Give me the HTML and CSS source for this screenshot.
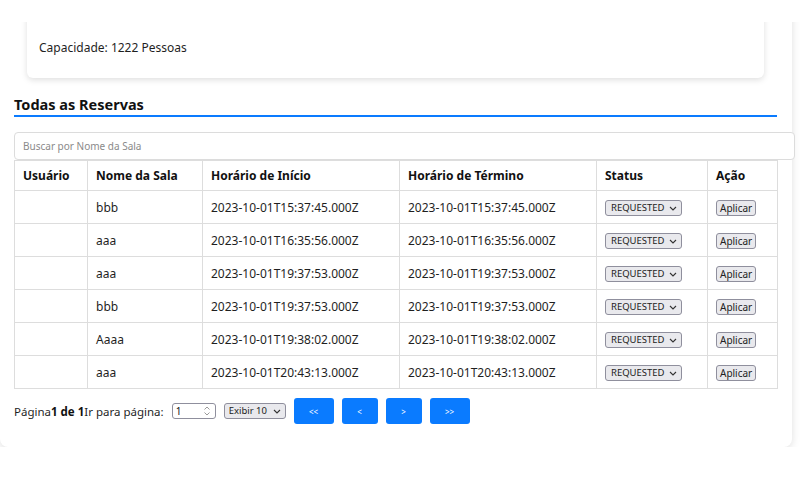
FILE: index.html
```html
<!DOCTYPE html>
<html lang="pt">
<head>
<meta charset="utf-8">
<title>Reservas</title>
<link rel="stylesheet" href="styles.css">
</head>
<body>
<div class="topbar"></div>
<main class="panel">
  <section class="room-card">
    <p class="room-line">Capacidade: 1222 Pessoas</p>
  </section>

  <h3 class="section-title">Todas as Reservas</h3>

  <input class="search" type="text" placeholder="Buscar por Nome da Sala">

  <table class="res-table">
    <colgroup>
      <col class="c-user"><col class="c-room"><col class="c-start"><col class="c-end"><col class="c-status"><col class="c-action">
    </colgroup>
    <thead>
      <tr><th>Usuário</th><th>Nome da Sala</th><th>Horário de Início</th><th>Horário de Término</th><th>Status</th><th>Ação</th></tr>
    </thead>
    <tbody>
      <tr><td></td><td>bbb</td><td>2023-10-01T15:37:45.000Z</td><td>2023-10-01T15:37:45.000Z</td>
        <td><span class="sel"><select class="status"><option>REQUESTED</option></select><svg class="chev" viewBox="0 0 8 5" width="8" height="5"><path d="M1 1l3 3 3-3" fill="none" stroke="#333" stroke-width="1.1"/></svg></span></td>
        <td><button class="apply">Aplicar</button></td></tr>
      <tr><td></td><td>aaa</td><td>2023-10-01T16:35:56.000Z</td><td>2023-10-01T16:35:56.000Z</td>
        <td><span class="sel"><select class="status"><option>REQUESTED</option></select><svg class="chev" viewBox="0 0 8 5" width="8" height="5"><path d="M1 1l3 3 3-3" fill="none" stroke="#333" stroke-width="1.1"/></svg></span></td>
        <td><button class="apply">Aplicar</button></td></tr>
      <tr><td></td><td>aaa</td><td>2023-10-01T19:37:53.000Z</td><td>2023-10-01T19:37:53.000Z</td>
        <td><span class="sel"><select class="status"><option>REQUESTED</option></select><svg class="chev" viewBox="0 0 8 5" width="8" height="5"><path d="M1 1l3 3 3-3" fill="none" stroke="#333" stroke-width="1.1"/></svg></span></td>
        <td><button class="apply">Aplicar</button></td></tr>
      <tr><td></td><td>bbb</td><td>2023-10-01T19:37:53.000Z</td><td>2023-10-01T19:37:53.000Z</td>
        <td><span class="sel"><select class="status"><option>REQUESTED</option></select><svg class="chev" viewBox="0 0 8 5" width="8" height="5"><path d="M1 1l3 3 3-3" fill="none" stroke="#333" stroke-width="1.1"/></svg></span></td>
        <td><button class="apply">Aplicar</button></td></tr>
      <tr><td></td><td>Aaaa</td><td>2023-10-01T19:38:02.000Z</td><td>2023-10-01T19:38:02.000Z</td>
        <td><span class="sel"><select class="status"><option>REQUESTED</option></select><svg class="chev" viewBox="0 0 8 5" width="8" height="5"><path d="M1 1l3 3 3-3" fill="none" stroke="#333" stroke-width="1.1"/></svg></span></td>
        <td><button class="apply">Aplicar</button></td></tr>
      <tr><td></td><td>aaa</td><td>2023-10-01T20:43:13.000Z</td><td>2023-10-01T20:43:13.000Z</td>
        <td><span class="sel"><select class="status"><option>REQUESTED</option></select><svg class="chev" viewBox="0 0 8 5" width="8" height="5"><path d="M1 1l3 3 3-3" fill="none" stroke="#333" stroke-width="1.1"/></svg></span></td>
        <td><button class="apply">Aplicar</button></td></tr>
    </tbody>
  </table>

  <div class="pager">
    <span class="pager-text">Página<strong>1 de 1</strong>Ir para página:</span>
    <span class="num">
      <input class="num-input" type="text" value="1">
      <svg class="spin" viewBox="0 0 8 12" width="8" height="12"><path d="M1.5 4.5L4 2l2.5 2.5M1.5 7.5L4 10l2.5-2.5" fill="none" stroke="#9a9a9a" stroke-width="1"/></svg>
    </span>
    <span class="sel sel-size"><select class="size"><option>Exibir 10</option></select><svg class="chev" viewBox="0 0 8 5" width="8" height="5"><path d="M1 1l3 3 3-3" fill="none" stroke="#333" stroke-width="1.1"/></svg></span>
    <button class="nav wide">&lt;&lt;</button>
    <button class="nav">&lt;</button>
    <button class="nav">&gt;</button>
    <button class="nav wide">&gt;&gt;</button>
  </div>
</main>
</body>
</html>
```
FILE: styles.css
```css
* { box-sizing: border-box; }
html, body { margin: 0; padding: 0; background: #fff; }
body {
  font-family: "Noto Sans", "Open Sans", sans-serif;
  font-size: 12px;
  color: #1f1f1f;
}
.topbar {
  position: fixed;
  top: 0; left: 0; right: 0;
  height: 22px;
  background: #fff;
  z-index: 10;
}
.panel {
  width: 792px;
  padding: 0 15px 23px 14px;
  background: #fff;
  border-radius: 0 0 8px 8px;
  box-shadow: 0 2px 8px rgba(0,0,0,0.13);
}
.room-card {
  margin: 0 13px;
  padding: 39px 12px 22px;
  background: #fff;
  border-radius: 0 0 6px 6px;
  box-shadow: 0 2px 6px rgba(0,0,0,0.13);
}
.room-line {
  margin: 0;
  line-height: 17px;
  font-size: 12px;
}
.section-title {
  margin: 16px 0 0;
  padding-bottom: 1px;
  font-size: 14.5px;
  line-height: 20px;
  font-weight: 700;
  color: #111;
  border-bottom: 2px solid #0a7bff;
}
.search {
  display: block;
  box-sizing: content-box;
  width: 100%;
  height: 26px;
  margin: 15px 0 0;
  padding: 0 8px;
  border: 1px solid #dcdcdc;
  border-radius: 4px;
  font-family: inherit;
  font-size: 10px;
  color: #333;
  outline: none;
}
.search::placeholder { color: #8a8a8a; }
.res-table {
  width: 100%;
  border-collapse: collapse;
  table-layout: fixed;
}
.c-user { width: 73px; }
.c-room { width: 115px; }
.c-start { width: 197px; }
.c-end { width: 197px; }
.c-status { width: 111px; }
.c-action { width: 70px; }
.res-table th, .res-table td {
  border: 1px solid #dddddd;
  padding: 0 7px 0 8px;
  text-align: left;
  vertical-align: middle;
  white-space: nowrap;
}
.res-table th {
  height: 30px;
  font-weight: 700;
  font-size: 12px;
  color: #111;
}
.res-table td {
  height: 33px;
  font-size: 12px;
}
.sel {
  position: relative;
  display: inline-block;
  vertical-align: middle;
}
.sel select {
  appearance: none;
  -webkit-appearance: none;
  display: block;
  height: 16px;
  margin: 0;
  padding: 0 14px 0 5px;
  font-family: inherit;
  font-size: 9.5px;
  line-height: 14px;
  color: #222;
  background: #e9e9ed;
  border: 1px solid #8f8f9d;
  border-radius: 3px;
}
.status { width: 77px; }
.chev {
  position: absolute;
  right: 5px;
  top: 6px;
  pointer-events: none;
}
.apply {
  display: inline-block;
  vertical-align: middle;
  height: 16px;
  margin: 0;
  padding: 0 3px;
  font-family: inherit;
  font-size: 10px;
  line-height: 14px;
  color: #222;
  background: #e9e9ed;
  border: 1px solid #8f8f9d;
  border-radius: 3px;
}
.pager {
  display: flex;
  align-items: center;
  gap: 8px;
  margin-top: 9px;
}
.pager-text {
  font-size: 11.5px;
  color: #1f1f1f;
}
.pager-text strong { font-weight: 700; color: #111; }
.num {
  position: relative;
  display: inline-flex;
  align-items: center;
  width: 44px;
  height: 16px;
  border: 1px solid #8f8f9d;
  border-radius: 3px;
  background: #fff;
}
.num-input {
  width: 28px;
  height: 14px;
  border: 0;
  padding: 0 0 0 3px;
  font-family: inherit;
  font-size: 10px;
  color: #111;
  background: transparent;
  outline: none;
}
.spin {
  position: absolute;
  right: 4px;
  top: 1px;
}
.size { width: 62px; }
.sel-size select { font-size: 9.5px; padding: 0 14px 0 4px; }
.nav {
  height: 26px;
  width: 36px;
  margin: 0;
  padding: 0;
  border: 0;
  border-radius: 3px;
  background: #0a7bff;
  color: #fff;
  font-family: inherit;
  font-size: 8px;
}
.nav.wide { width: 40px; }
```
